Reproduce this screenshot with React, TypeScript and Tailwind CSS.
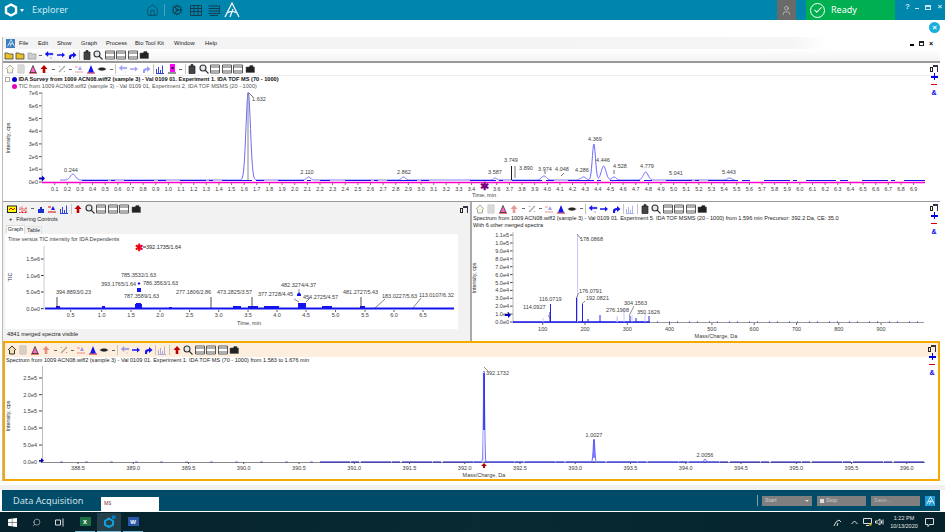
import { ReactNode } from "react";
import { Check, Cog, Home, Search, User } from "lucide-react";

const BLUE = "#1414f0";
const LIGHT = "#6a6aff";

function Glyph({ kind, dim }: { kind: string; dim?: boolean }) {
  const o = dim ? 0.4 : 1;
  let body: ReactNode = null;
  switch (kind) {
    case "home":
      body = <path d="M1 5 5 1l4 4M2.500 5v4h5V5" fill="#f4e2b0" stroke="#333" strokeWidth="1" />;
      break;
    case "doc":
      body = <path d="M2 1h6v8H2zM3 3h4M3 5h4M3 7h4" fill="#ddd" stroke="#666" strokeWidth="1" />;
      break;
    case "peak":
      body = (
        <>
          <path d="M1 9h8" stroke="#c00" strokeWidth="1" />
          <path d="M2 8.500 5 1.500 8 8.500z" fill="#f6c" stroke="#333" strokeWidth=".8" />
        </>
      );
      break;
    case "up":
      body = <path d="M5 1 8.500 5H6.300v4H3.700V5H1.500z" fill="#c00000" />;
      break;
    case "pct":
      body = <path d="M2 8 8 2M2.500 2v1M7.500 7v1" stroke="#333" strokeWidth="1.400" />;
      break;
    case "tri":
      body = (
        <>
          <path d="M1 3h3M1 8h8" stroke="#d00" strokeWidth="1" />
          <path d="M6 2 8 6H4z" fill={BLUE} />
        </>
      );
      break;
    case "blue":
      body = (
        <>
          <path d="M1 9h8" stroke="#d00" strokeWidth="1" />
          <path d="M5 1 8 8.500H2z" fill={BLUE} />
        </>
      );
      break;
    case "eye":
      body = <path d="M.5 5C3 2.500 7 2.500 9.500 5 7 7.500 3 7.500.5 5z" fill="#222" stroke="#fff" strokeWidth=".5" />;
      break;
    case "left":
      body = <path d="M1 4 4 1.500v1.800h5v1.500H4v1.700zM7 7v2" fill={BLUE} stroke={BLUE} strokeWidth=".4" />;
      break;
    case "right":
      body = <path d="M9 5 6 2.500v1.800H1v1.500h5v1.700z" fill={BLUE} />;
      break;
    case "curve":
      body = <path d="M2 9V6.500C2 5 3.500 4 6 4V2l3.500 3L6 8V6C4.500 6 4 7 4 9z" fill={BLUE} />;
      break;
    case "bars":
      body = <path d="M1.500 9V5M3.500 9V3M5.500 9V6M7.500 9V1.500M1 9.500h8" stroke="#3344dd" strokeWidth="1" />;
      break;
    case "mag":
      body = (
        <>
          <rect x="3" y="0" width="5" height="8" fill="#f0f" />
          <path d="M1 9h8" stroke="#222" strokeWidth="1" />
          <rect x="4.500" y="3" width="2" height="2" fill="#111" />
        </>
      );
      break;
    case "clip":
      body = <path d="M2 2h6v7.500H2zM4 .5h2V2H4z" fill="#444" stroke="#222" strokeWidth=".7" />;
      break;
    case "zoom":
      body = <path d="M6.500 6.500 9.500 9.500M7 4a3 3 0 1 1-6 0 3 3 0 0 1 6 0z" fill="#dfe8ee" stroke="#333" strokeWidth="1.100" />;
      break;
    case "win":
      body = <path d="M.5 1h9v8h-9zM.5 3h9M.5 7h9" fill="#fff" stroke="#333" strokeWidth=".8" />;
      break;
    case "cam":
      body = <path d="M1 3h3l1-1.500h3V3h1.500v5.500H1z" fill="#222" stroke="#555" strokeWidth=".5" />;
      break;
    case "flag":
      body = (
        <>
          <rect x=".5" y="2" width="9" height="6.500" fill="#ff0" stroke="#222" />
          <path d="M2 6 4 4l2 2 2-2" stroke="#c00" fill="none" />
        </>
      );
      break;
    case "tic":
      body = <path d="M1 8.500h8M2 6V3M4 8V2M6 7V4M8 8V3" stroke="#d11" strokeWidth="1" strokeDasharray="1 .5" />;
      break;
    case "barsolid":
      body = <path d="M2 9V5h2V3h2v2h2v4z" fill="#1c30d0" />;
      break;
    case "folder":
      body = <path d="M1 3h3l1 1h4v5H1z" fill="#e9c22b" stroke="#333" strokeWidth=".7" />;
      break;
    case "folderg":
      body = <path d="M1 3h3l1 1h4v5H1z" fill="#ccc" stroke="#999" strokeWidth=".7" />;
      break;
  }
  return (
    <svg width="10" height="10" viewBox="0 0 10 10" style={{ opacity: o }} className="block shrink-0">
      {body}
    </svg>
  );
}

function Caret() {
  return (
    <span className="flex w-[6px] shrink-0 items-center justify-center">
      <span className="h-[1px] w-[3px] bg-[#666]" />
    </span>
  );
}

function Sep() {
  return <span className="mx-[1px] h-[10px] w-px shrink-0 bg-[#c4c4c4]" />;
}

function Cell({ kind, dim }: { kind: string; dim?: boolean }) {
  return (
    <span className="flex w-[11.500px] shrink-0 items-center justify-center">
      <Glyph kind={kind} dim={dim} />
    </span>
  );
}

function PaneTools({ homeOn, upOn, triDim }: { homeOn?: boolean; upOn?: boolean; triDim?: boolean }) {
  return (
    <>
      <Cell kind="home" dim={!homeOn} />
      <Cell kind="doc" dim />
      <Cell kind="peak" />
      <Cell kind="up" dim={!upOn} />
      <Caret />
      <Cell kind="pct" dim />
      <Caret />
      <Cell kind="tri" dim={triDim} />
      <Cell kind="blue" />
      <Cell kind="eye" />
      <Caret />
      <Sep />
    </>
  );
}

function Rail({ top }: { top?: boolean }) {
  return (
    <div className="flex w-[12px] shrink-0 flex-col items-center pt-[1px]">
      <span className="flex h-[8px] w-[9px] items-end">
        <span className="h-[5px] w-[3px] border border-[#222]" />
        <span className="h-[7px] w-[5px] border-t-2 border-r border-[#334]" />
      </span>
      {top !== false && (
        <>
          <span className="relative mt-[1px] h-[7px] w-[7px]">
            <span className="absolute top-[3px] left-0 h-[1.500px] w-[7px] bg-[#0000e8]" />
            <span className="absolute top-0 left-[3px] h-[7px] w-[1.500px] bg-[#0000e8]" />
          </span>
          <span className="my-[4px] h-[1px] w-[6px] bg-[#d40000]" />
          <span className="text-[7px] leading-[8px] font-bold text-[#0000ee]">&amp;</span>
        </>
      )}
    </div>
  );
}

function Label({ x, y, c, a = "start", s = 5.5 }: { x: number; y: number; c: string; a?: "start" | "middle" | "end"; s?: number }) {
  return (
    <text x={x} y={y} fontSize={s} fill="#3c3c3c" textAnchor={a}>
      {c}
    </text>
  );
}

function Plot({ x, y, w, h, children }: { x: number; y: number; w: number; h: number; children: ReactNode }) {
  return (
    <svg width={w} height={h} viewBox={`${x} ${y} ${w} ${h}`} className="block shrink-0">
      {children}
    </svg>
  );
}

function gauss(peaks: number[][], from: number, to: number, base: number) {
  let d = `M${from} ${base}`;
  for (let x = from; x <= to; x += 0.5) {
    let v = 0;
    peaks.forEach(([px, ph, pw]) => {
      v += ph * Math.exp(-((x - px) * (x - px)) / (2 * pw * pw));
    });
    d += `L${x} ${(base - v).toFixed(1)}`;
  }
  return d;
}

const topX = (t: number) => 42.1 + 126.3 * t;
const topPeaks = [
  [0.244, 6, 2.500],
  [1.632, 88, 2.200],
  [2.11, 3, 2],
  [2.862, 3, 2],
  [3.587, 2, 1.500],
  [3.974, 4, 2.400],
  [4.286, 3, 2.500],
  [4.369, 36, 1.600],
  [4.446, 14, 2.400],
  [4.528, 3, 2],
  [4.779, 8, 2.400],
  [5.443, 2, 2],
].map(([t, h, w]) => [topX(t), h, w]);

const topLabels: [number, number, string][] = [
  [71, 172, "0.244"],
  [259, 101, "1.632"],
  [307, 174, "2.110"],
  [404, 174, "2.862"],
  [495, 174, "3.587"],
  [511, 162, "3.749"],
  [526, 170, "3.890"],
  [545, 171, "3.974"],
  [562, 171, "4.048"],
  [582, 172, "4.286"],
  [595, 141, "4.369"],
  [603, 162, "4.446"],
  [620, 168, "4.528"],
  [647, 168, "4.779"],
  [676, 175, "5.041"],
  [729, 174, "5.443"],
];

function TopChart() {
  const ticks = Array.from({ length: 69 }, (_, i) => i + 1).filter((i) => i !== 35);
  return (
    <Plot x={4} y={90} w={928} h={111}>
      <text transform="translate(10 138) rotate(-90)" fontSize="5.400" fill="#333" textAnchor="middle">
        Intensity, cps
      </text>
      {[7, 6, 5, 4, 3, 2, 1, 0].map((v) => (
        <g key={v}>
          <Label x={38} y={182 - v * 12.7 + 2} a="end" c={`${v}e${v === 0 ? 0 : 6}`} />
          <path d={`M39 ${182 - v * 12.7}h3`} stroke="#555" />
        </g>
      ))}
      <path d="M42 92V182" stroke="#bbb" />
      <path d={gauss(topPeaks, 60, 735, 180)} stroke={LIGHT} strokeWidth="1" fill="none" />
      <path d="M82 180.500H330M345 180.500H440M470 180.500H925" stroke={BLUE} strokeWidth="1" strokeDasharray="26 3 4 9 30 4 8 14" />
      <path d="M248 93V180" stroke="#888" strokeWidth="1" />
      <path d="M249 93l4 4M515 166V178M545 171v3M564 173l-3 3M614 170v4" stroke="#333" strokeWidth=".7" fill="none" />
      <path d="M511.500 166V180" stroke="#222" strokeWidth="1" />
      {topLabels.map(([x, y, c]) => (
        <Label key={c} x={x} y={y} c={c} a="middle" />
      ))}
      <path d="M42 182.500H925" stroke="#ff00cc" strokeWidth="1.300" />
      <path d="M39 177.500h3v-2l3 3-3 3v-2h-3z" fill="#0000c0" />
      {ticks.map((i) => (
        <g key={i}>
          <path d={`M${topX(i / 10)} 183v2`} stroke="#777" />
          <Label x={topX(i / 10)} y={191} a="middle" s={5.300} c={(i / 10).toFixed(1)} />
        </g>
      ))}
      <text x="484" y="190" fontSize="11" fill="#7a0080" textAnchor="middle" fontWeight="700">
        ✱
      </text>
      <Label x={472} y={197} c="Time, min" />
    </Plot>
  );
}

const leftLabels: [number, number, string][] = [
  [121, 277, "785.3532/1.63"],
  [101, 286, "393.1765/1.64"],
  [143, 285, "786.3563/1.63"],
  [56, 294, "394.8893/0.23"],
  [124, 298, "787.3589/1.63"],
  [176, 294, "277.1806/2.86"],
  [217, 294, "473.2825/3.57"],
  [258, 296, "377.2728/4.45"],
  [303, 299, "454.2725/4.57"],
  [281, 287, "482.3274/4.37"],
  [343, 294, "481.2727/5.43"],
  [382, 298, "183.0227/5.63"],
  [419, 297, "113.0107/6.32"],
];

function LeftChart() {
  return (
    <Plot x={5} y={234} w={453} h={95}>
      <Label x={8} y={241} c="Time versus TIC intensity for IDA Dependents" />
      <text transform="translate(12 277) rotate(-90)" fontSize="5.500" fill="#335" textAnchor="middle">
        TIC
      </text>
      {[
        ["0.0e0", 308.700],
        ["5.0e5", 292],
        ["1.0e6", 275.500],
        ["1.5e6", 259],
      ].map(([c, y]) => (
        <g key={c as string}>
          <Label x={40} y={(y as number) + 2} a="end" c={c as string} />
          <path d={`M41 ${y}h3`} stroke="#333" />
        </g>
      ))}
      <path d="M44 246V309" stroke="#ccc" />
      <path d="M45 308.500H454" stroke={BLUE} strokeWidth="2" />
      <path
        d="M56 308V306H60V308ZM102 308V306H105V308ZM135 308V304H142V308ZM136 304V303H141V304ZM169 308V307H172V308ZM233 308V306H241V308ZM248 308V306H258V308ZM264 308V306H279V308ZM298 308V303H306V308ZM322 308V306H332V308ZM360 308V306H365V308Z"
        fill={BLUE}
      />
      <path d="M57 297V308M211 297V308M252 297V308M361 297V308" stroke="#222" strokeWidth=".8" />
      <path d="M375 308 385 299M413 308 421 298M294 299l5 3M299 289v6M310 298l-4 4" stroke="#333" strokeWidth=".6" />
      <path d="M137 288h4v4h-4zM137.500 283.500 139 282l1.500 1.500L139 285zM297 294l2-1.500 2 1.500v2h-4zM141 282h1" fill={BLUE} />
      <text x="139" y="251" fontSize="10" fontWeight="700" fill="#e8001c" textAnchor="middle">
        ✱
      </text>
      <path d="M143 247h3" stroke="#222" />
      <text x={146} y={249} fontSize="5.500" fill="#222">
        392.1735/1.64
      </text>
      {leftLabels.map(([x, y, c]) => (
        <Label key={c} x={x} y={y} c={c} />
      ))}
      {[
        ["0.5", 70.700],
        ["1.0", 101.700],
        ["1.5", 131],
        ["2.0", 160],
        ["2.5", 189.500],
        ["3.0", 218.700],
        ["3.5", 248],
        ["4.0", 277],
        ["4.5", 306],
        ["5.0", 335.500],
        ["5.5", 365],
        ["6.0", 394],
        ["6.5", 423],
      ].map(([c, x]) => (
        <g key={c as string}>
          <path d={`M${x} 310v2`} stroke="#666" />
          <Label x={x as number} y={317} a="middle" c={c as string} />
        </g>
      ))}
      <Label x={249} y={325} a="middle" c="Time, min" />
    </Plot>
  );
}

const rightX = (m: number) => 501.4 + 0.423 * m;

function RightChart() {
  const vals = ["0.0e0", "1.0e4", "2.0e4", "3.0e4", "4.0e4", "5.0e4", "6.0e4", "7.0e4", "8.0e4", "9.0e4", "1.0e5", "1.1e5"];
  return (
    <Plot x={473} y={228} w={455} h={113}>
      <text transform="translate(477 278) rotate(-90)" fontSize="5.400" fill="#333" textAnchor="middle">
        Intensity, cps
      </text>
      {vals.map((c, i) => (
        <g key={c}>
          <Label x={510} y={322 - i * 7.9 + 2} a="end" c={c} />
          <path d={`M511 ${322 - i * 7.9}h3`} stroke="#555" />
        </g>
      ))}
      <path d="M514 232V322" stroke="#bbb" />
      <path d="M514 322.500H925" stroke="#999" />
      <path d="M514 322H650" stroke={BLUE} strokeWidth="1.500" />
      <path d="M650 322H925" stroke={BLUE} strokeWidth="1" strokeDasharray="1 7 1 11" />
      <path d="M578.500 234V322M544 318V322M618 316V322M618.500 318v4M625 308V322M633 315V322M646 313V322" stroke="#c8c8ff" strokeWidth="1" />
      <path d="M551 312V322M551.500 304V322M577.500 298V322M583.500 304V322M589 319V322M601 315V322M631 316V322M650 316V322M637 318V322" stroke="#2222dd" strokeWidth="1" />
      <path d="M578 234l4 5M577 298l3-5M583 304l3-3M549 315l2 3M630 316l5-10" stroke="#444" strokeWidth=".6" fill="none" />
      <path d="M506 314h3v-2l3 3-3 3v-2h-3z" fill="#0000c0" />
      <Label x={581} y={241} c="178.0868" />
      <Label x={580} y={293} c="176.0791" />
      <Label x={587} y={300} c="192.0821" />
      <Label x={540} y={301} c="116.0719" />
      <Label x={524} y={309} c="114.0927" />
      <Label x={607} y={312} c="276.1908" />
      <Label x={625} y={305} c="304.1563" />
      <Label x={638} y={314} c="350.1626" />
      {[100, 200, 300, 400, 500, 600, 700, 800, 900].map((m) => (
        <g key={m}>
          <path d={`M${rightX(m)} 323v2`} stroke="#666" />
          <Label x={rightX(m)} y={331} a="middle" c={String(m)} />
        </g>
      ))}
      <Label x={717} y={338} a="middle" c="Mass/Charge, Da" />
    </Plot>
  );
}

const botX = (m: number) => 78 + 110.5 * (m - 388.5);

function BottomChart() {
  const ys: [string, number][] = [
    ["0.0e0", 461.700],
    ["5.0e4", 445],
    ["1.0e5", 428],
    ["1.5e5", 411],
    ["2.0e5", 394.700],
    ["2.5e5", 378],
  ];
  const xs = Array.from({ length: 16 }, (_, i) => 388.5 + i * 0.5);
  return (
    <Plot x={5} y={364} w={924} h={115}>
      <text transform="translate(10 416) rotate(-90)" fontSize="5.400" fill="#333" textAnchor="middle">
        Intensity, cps
      </text>
      {ys.map(([c, y]) => (
        <g key={c}>
          <Label x={37} y={y + 2} a="end" c={c} />
          <path d={`M39 ${y}h3`} stroke="#444" />
        </g>
      ))}
      <path d="M42.500 366V462" stroke="#bbb" />
      <path d="M42 462.500H925" stroke="#888" />
      <path d="M320 462H925" stroke="#0a0ac0" strokeWidth="1" strokeDasharray="30 1 8 2" />
      <path d="M60 462H320" stroke="#3333aa" strokeWidth=".6" strokeDasharray="3 22" />
      <path d={gauss([[484, 91, 0.6], [594, 23, 0.8], [705, 3, 1]], 470, 720, 462)} stroke={LIGHT} fill="none" />
      <path d="M483.500 372V462" stroke="#d8d8ff" strokeWidth="1.500" />
      <path d="M484 373V430" stroke="#1a1aee" strokeWidth="1.500" />
      <path d="M594 440V458" stroke="#5a5aff" strokeWidth="1.500" />
      <path d="M484 367l4 4" stroke="#444" strokeWidth=".6" />
      <Label x={486} y={375} c="392.1732" />
      <Label x={594} y={437} a="middle" c="1.0027" />
      <Label x={705} y={457} a="middle" c="2.0056" />
      <path d="M39 460h2v-2l3 2.500-3 2.500v-2h-2z" fill="#0000c0" />
      <path d="M484 463l3 3h-2v2h-2v-2h-2z" fill="#b00000" />
      {xs.map((m) => (
        <g key={m}>
          <path d={`M${botX(m)} 462v2`} stroke="#555" />
          <Label x={botX(m)} y={470} a="middle" c={m.toFixed(1)} />
        </g>
      ))}
      <Label x={484} y={477} a="middle" c="Mass/Charge, Da" />
    </Plot>
  );
}

function LogoA({ size, color }: { size: number; color: string }) {
  return (
    <svg width={size} height={size} viewBox="0 0 16 16" fill="none" stroke={color} strokeWidth="1.300" className="block">
      <path d="M1 15 8 1l7 14M3 11c3-2 7-2 10 0M6 15l3-8" />
    </svg>
  );
}

function Header() {
  return (
    <div className="flex h-[20px] shrink-0 items-center bg-[#0085ad] text-white">
      <svg width="14" height="14" viewBox="0 0 14 14" className="ml-[4px]">
        <path d="M7 1.500 12 4.200v5.600L7 12.500 2 9.800V4.200z" fill="none" stroke="#fff" strokeWidth="2.400" />
      </svg>
      <span className="ml-[2px] h-0 w-0 border-x-[2.500px] border-t-[3px] border-x-transparent border-t-white" />
      <span className="ml-[8px] w-[56px] font-['Noto_Sans',sans-serif] text-[9.200px] text-[#d5eaf2]">Explorer</span>
      <Home size={13} strokeWidth={1.300} className="ml-[58px] text-[#123f52]" />
      <span className="ml-[5px] h-[12px] w-px bg-[#4f9fb9]" />
      <Cog size={12} strokeWidth={2} className="ml-[6px] text-[#123f52]" />
      <svg width="12" height="11" viewBox="0 0 12 11" className="ml-[7px]" fill="none" stroke="#123f52">
        <path d="M.5.500h11v10H.5zM.5 3.500h11M.5 6.500h11M4 .5v10M8 .5v10" />
      </svg>
      <svg width="12" height="11" viewBox="0 0 12 11" className="ml-[6px]" fill="none" stroke="#123f52">
        <path d="M.5 1h11M.5 3.500h11M.5 6h11M.5 8.500h11M2 10.500h8M11.500 1v8" />
      </svg>
      <span className="ml-[4px]">
        <LogoA size={16} color="#e8f4f8" />
      </span>
      <span className="ml-[537px] flex h-[20px] w-[19px] items-center justify-center bg-[#6a6a6a]">
        <User size={11} strokeWidth={1.300} className="text-[#ddd]" />
      </span>
      <div className="ml-[10px] flex h-[20px] w-[89px] items-center bg-[#00b050] pl-[4px]">
        <span className="flex h-[15px] w-[15px] items-center justify-center rounded-full border border-white">
          <Check size={10} strokeWidth={2.500} />
        </span>
        <span className="ml-[6px] font-['Noto_Sans',sans-serif] text-[9px]">Ready</span>
      </div>
      <div className="flex flex-1 items-center gap-[4.500px] pb-[6px] pl-[10px] text-[8px] leading-none font-bold text-[#cfe6ef]">
        <span className="w-[5px]">?</span>
        <span className="mt-[3px] h-px w-[4px] bg-[#cfe6ef]" />
        <span className="ml-[2px] h-[5px] w-[6px] border border-t-2 border-[#cfe6ef]" />
        <span className="ml-[2px] w-[5px]">×</span>
      </div>
    </div>
  );
}

function MenuBar() {
  const items: [string, string][] = [
    ["File", "w-[19px]"],
    ["Edit", "w-[19px]"],
    ["Show", "w-[24px]"],
    ["Graph", "w-[25px]"],
    ["Process", "w-[29px]"],
    ["Bio Tool Kit", "w-[39px]"],
    ["Window", "w-[31px]"],
    ["Help", "w-[20px]"],
  ];
  return (
    <div className="flex h-[12px] shrink-0 items-center bg-[linear-gradient(90deg,#f3f3f3,#f5f5f5_84%,#fff_88%)] pr-[7px] pl-[3px]">
      <span className="flex h-[9px] w-[9px] items-center justify-center bg-[#3c7fc0]">
        <LogoA size={8} color="#fff" />
      </span>
      <div className="ml-[4px] flex text-[5.800px] text-[#222]">
        {items.map(([c, w]) => (
          <span key={c} className={w}>
            {c}
          </span>
        ))}
      </div>
      <div className="ml-auto flex items-center gap-[5px] text-[7px] leading-none font-bold text-black">
        <span className="mt-[4px] h-[1.500px] w-[4px] bg-black" />
        <span className="h-[5px] w-[5px] border border-t-2 border-[#222]" />
        <span>×</span>
      </div>
    </div>
  );
}

function AppTools() {
  return (
    <div className="flex h-[12px] shrink-0 items-center bg-[linear-gradient(#ffffff,#f3f3f3)]">
      <Cell kind="folder" />
      <Cell kind="folder" />
      <Cell kind="folderg" />
      <Caret />
      <Cell kind="left" />
      <Cell kind="right" />
      <Cell kind="curve" />
      <Sep />
      <Cell kind="clip" />
      <Cell kind="zoom" />
      <Cell kind="win" />
      <Cell kind="win" />
      <Cell kind="win" />
      <Cell kind="cam" />
    </div>
  );
}

function TopPane() {
  return (
    <div className="relative h-[140px] shrink-0 border-t-2 border-[#999] bg-white">
      <div className="flex h-[13px] items-center border-b border-[#eee] pl-[1px]">
        <PaneTools upOn triDim />
        <Cell kind="left" dim />
        <Cell kind="right" dim />
        <Cell kind="curve" dim />
        <Sep />
        <Cell kind="bars" />
        <Cell kind="mag" />
        <Caret />
        <Sep />
        <Cell kind="clip" />
        <Cell kind="zoom" />
        <Cell kind="win" />
        <Cell kind="win" />
        <Cell kind="win" />
        <Cell kind="cam" />
      </div>
      <div className="flex h-[7px] items-center pl-[2px] text-[5.650px] leading-none font-bold text-[#111]">
        <span className="mr-[2px] h-[5px] w-[5px] border border-[#aaa]" />
        <span className="mr-[2px] h-[4.500px] w-[4.500px] rounded-full bg-[#0000d0]" />
        IDA Survey from 1009 ACN08.wiff2 (sample 3) - Val 0109 01. Experiment 1. IDA TOF MS (70 - 1000)
      </div>
      <div className="flex h-[7px] items-center pl-[9px] text-[5.600px] leading-none text-[#555]">
        <span className="mr-[2px] h-[4.500px] w-[4.500px] rounded-full bg-[#e800c0]" />
        TIC from 1009 ACN08.wiff2 (sample 3) - Val 0109 01, Experiment 2, IDA TOF MSMS (20 - 1000)
      </div>
      <div className="flex pl-[1px]">
        <TopChart />
        <div className="absolute top-0 right-0">
          <Rail />
        </div>
      </div>
    </div>
  );
}

function LeftPane() {
  return (
    <div className="flex h-[139px] w-[469px] shrink-0 flex-col border-r-2 border-[#aaa] bg-[#f2f2f2]">
      <div className="flex h-[13px] shrink-0 items-center pl-[3px]">
        <Cell kind="flag" />
        <Cell kind="tic" />
        <Caret />
        <Cell kind="barsolid" />
        <Cell kind="tri" />
        <Cell kind="bars" />
        <Sep />
        <Cell kind="up" />
        <Cell kind="zoom" />
        <Cell kind="win" />
        <Cell kind="win" />
        <Cell kind="win" />
        <Cell kind="cam" />
        <div className="ml-auto">
          <Rail top={false} />
        </div>
      </div>
      <div className="flex h-[10px] shrink-0 items-center pl-[6px] text-[5.500px] leading-none text-[#222]">
        <span className="mr-[4px] font-bold">+</span>Filtering Controls
      </div>
      <div className="flex h-[9px] shrink-0 items-end pl-[3px] text-[5.500px] leading-none text-[#333]">
        <span className="flex h-[9px] w-[19px] items-center justify-center border-x border-t border-[#ddd] bg-white">Graph</span>
        <span className="ml-[1px] flex h-[8px] w-[16px] items-center justify-center border-t border-r border-[#e2e2e2]">Table</span>
      </div>
      <div className="flex shrink-0 pl-[2px]">
        <div className="bg-white">
          <LeftChart />
        </div>
      </div>
      <div className="flex flex-1 items-center pl-[4px] text-[5.700px] leading-none text-[#222]">4841 merged spectra visible</div>
    </div>
  );
}

function RightPane() {
  return (
    <div className="relative flex h-[139px] flex-1 flex-col bg-white">
      <div className="flex h-[13px] shrink-0 items-center pl-[2px]">
        <PaneTools triDim />
        <Cell kind="left" />
        <Cell kind="right" />
        <Cell kind="curve" />
        <Sep />
        <Cell kind="bars" dim />
        <Sep />
        <Cell kind="clip" />
        <Cell kind="zoom" />
        <Cell kind="win" />
        <Cell kind="win" />
        <Cell kind="win" />
        <Cell kind="cam" />
      </div>
      <div className="h-[7px] shrink-0 pl-[1px] text-[5.550px] leading-[7px] whitespace-nowrap text-[#222]">
        Spectrum from 1009 ACN08.wiff2 (sample 3) - Val 0109 01. Experiment 5. IDA TOF MSMS (20 - 1000) from 1.596 min Precursor: 392.2 Da, CE: 35.0
      </div>
      <div className="h-[6px] shrink-0 pl-[1px] text-[5.550px] leading-[6px] text-[#222]">With 6 other merged spectra</div>
      <RightChart />
      <div className="absolute top-0 right-0">
        <Rail />
      </div>
    </div>
  );
}

function BottomPane() {
  return (
    <div className="relative flex h-[140px] shrink-0 flex-col border-2 border-[#f5a800] bg-white">
      <div className="flex h-[14px] shrink-0 items-center bg-[#fdeedd] pl-[1px]">
        <PaneTools homeOn triDim />
        <Cell kind="left" dim />
        <Cell kind="right" />
        <Cell kind="curve" />
        <Sep />
        <Cell kind="bars" dim />
        <Sep />
        <Cell kind="up" />
        <Cell kind="zoom" />
        <Cell kind="win" />
        <Cell kind="win" />
        <Cell kind="win" />
        <Cell kind="cam" />
      </div>
      <div className="h-[7px] shrink-0 pl-[1px] text-[5.550px] leading-[7px] text-[#222]">
        Spectrum from 1009 ACN08.wiff2 (sample 3) - Val 0109 01. Experiment 1. IDA TOF MS (70 - 1000) from 1.583 to 1.676 min
      </div>
      <BottomChart />
      <div className="absolute top-0 right-0">
        <Rail />
      </div>
    </div>
  );
}

function AcquireBar() {
  return (
    <div className="ml-[2px] flex h-[21px] w-[938px] shrink-0 items-center bg-[#004b68] pl-[11px]">
      <span className="w-[88px] font-['Noto_Sans',sans-serif] text-[9.200px] text-[#cfe0e8]">Data Acquisition</span>
      <span className="flex h-[14px] w-[58px] items-center self-end bg-white pl-[3px] font-['Noto_Sans',sans-serif] text-[5px] text-[#703030]">MS</span>
      <span className="ml-auto h-[11px] w-px bg-[#8aa0aa]" />
      <span className="ml-[4px] flex h-[10px] w-[50px] items-center justify-between bg-[#7f7f7f] px-[3px] text-[5.500px] text-[#cfcfcf]">
        Start
        <span className="h-0 w-0 border-x-[2px] border-t-[2px] border-x-transparent border-t-[#ddd]" />
      </span>
      <span className="ml-[5px] flex h-[10px] w-[49px] items-center gap-[2px] bg-[#7f7f7f] px-[3px] text-[5.500px] text-[#cfcfcf]">
        <span className="h-[4px] w-[4px] bg-[#ddd]" />
        Stop
      </span>
      <span className="ml-[5px] flex h-[10px] w-[49px] items-center bg-[#7f7f7f] px-[3px] text-[5.500px] text-[#bbb]">Save...</span>
      <span className="mr-[5px] ml-[5px] flex h-[10px] w-[10px] items-center justify-center bg-[#1e9bd8]">
        <LogoA size={9} color="#fff" />
      </span>
    </div>
  );
}

function Taskbar() {
  return (
    <div className="flex h-[20px] shrink-0 items-center bg-[linear-gradient(90deg,#06222c,#072a33_50%,#06232c)] text-white">
      <svg width="9" height="9" viewBox="0 0 9 9" className="ml-[8px]" fill="#fff">
        <path d="M0 1.200 3.900.6v3.600H0zM4.300.5 9 0v4.200H4.300zM0 4.700h3.900v3.600L0 7.800zM4.300 4.700H9V9l-4.700-.6z" />
      </svg>
      <Search size={9} strokeWidth={1.500} className="ml-[15px] -scale-x-100 text-[#ddd]" />
      <svg width="9" height="9" viewBox="0 0 9 9" className="ml-[14px]" fill="none" stroke="#ddd">
        <path d="M.5 2h5v5h-5zM8 .5v8" />
      </svg>
      <span className="ml-[11px] flex h-[19px] w-[20px] items-center justify-center border-b border-[#7ab8d6]">
        <span className="flex h-[9px] w-[11px] items-center justify-center bg-[#1d7044] text-[7px] leading-none font-bold text-white">x</span>
      </span>
      <span className="ml-[2px] flex h-[19px] w-[24px] items-center justify-center border-b border-[#7ab8d6] bg-[#24404b]">
        <svg width="13" height="13" viewBox="0 0 13 13" fill="none">
          <path d="M6 3.500 10 6v4l-4 2-4-2V6z" stroke="#12a0e0" strokeWidth="2" />
          <rect x="9" y="0.500" width="3.500" height="3.500" fill="#0a7ac0" />
        </svg>
      </span>
      <span className="ml-[2px] flex h-[19px] w-[20px] items-center justify-center border-b border-[#7ab8d6]">
        <span className="flex h-[9px] w-[11px] items-center justify-center bg-[#2b57a8] text-[6px] leading-none font-bold text-white">W</span>
      </span>
      <div className="ml-auto flex items-center text-[#ddd]">
        <svg width="9" height="9" viewBox="0 0 9 9" fill="none" stroke="#ddd">
          <path d="M1 8 3 4l3-2 2 2M5 5l-1 3" />
        </svg>
        <svg width="7" height="5" viewBox="0 0 7 5" className="ml-[9px]" fill="none" stroke="#ddd">
          <path d="M.5 4 3.500 1l3 3" />
        </svg>
        <svg width="9" height="8" viewBox="0 0 9 8" className="ml-[5px]" fill="none" stroke="#ddd">
          <path d="M.5.500h8v5h-8zM3 7.500h3" />
          <path d="M5.500 7.500h3v-3z" fill="#f0b400" stroke="none" />
        </svg>
        <svg width="9" height="8" viewBox="0 0 9 8" className="ml-[3px]" fill="none" stroke="#ddd">
          <path d="M.5 3h2L5 1v6L2.500 5h-2zM6.500 2.500v3M8 1.500v5" />
        </svg>
        <div className="ml-[5px] w-[30px] text-center text-[5.500px] leading-[8px] text-[#e5e5e5]">
          <div>1:22 PM</div>
          <div>10/13/2020</div>
        </div>
        <svg width="9" height="9" viewBox="0 0 9 9" className="mr-[11px] ml-[6px]" fill="none" stroke="#ddd">
          <path d="M.5.500h8v6H4.500L3 8.500v-2H.5z" />
        </svg>
      </div>
    </div>
  );
}

export default function App() {
  return (
    <div className="flex h-[532px] w-[945px] flex-col overflow-hidden bg-white font-['Liberation_Sans',sans-serif]">
      <Header />
      <div className="relative h-[17px] shrink-0">
        <span className="absolute top-[2px] right-[5px] flex h-[11px] w-[11px] items-center justify-center rounded-full bg-[#17b0dc] text-[8px] leading-none font-bold text-white">×</span>
      </div>
      <div className="ml-[2px] flex w-[938px] shrink-0 flex-col border-l border-[#bbb]">
        <MenuBar />
        <AppTools />
        <TopPane />
        <div className="flex border-t border-[#999]">
          <LeftPane />
          <RightPane />
        </div>
        <BottomPane />
      </div>
      <div className="h-[9px] shrink-0 bg-[linear-gradient(#fff_40%,#f0f0f0_40%)]" />
      <AcquireBar />
      <div className="h-[1px] shrink-0 bg-white" />
      <Taskbar />
    </div>
  );
}
